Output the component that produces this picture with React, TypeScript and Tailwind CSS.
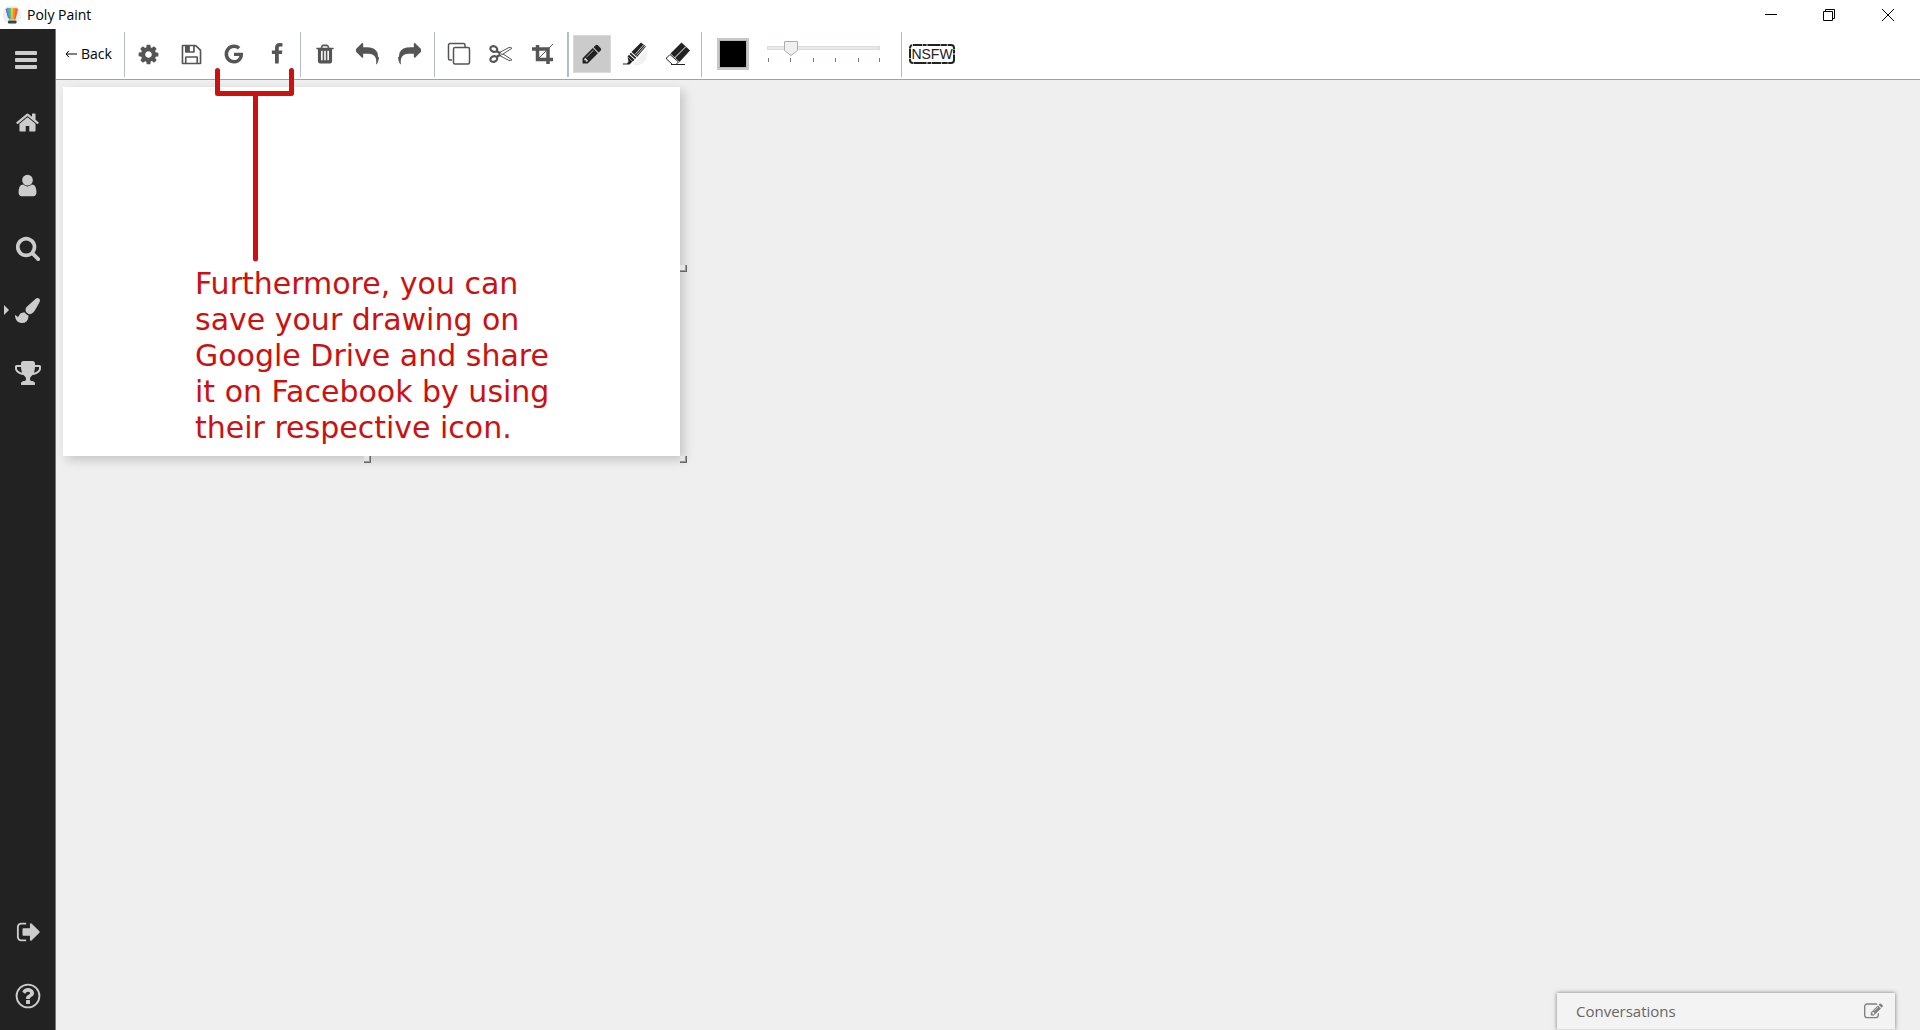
import React, { useState } from "react";

const PATHS = {
  home: "M1472 992v480q0 26-19 45t-45 19h-384v-384h-256v384h-384q-26 0-45-19t-19-45v-480q0-1 .5-3t.5-3l575-474 575 474q1 2 1 6zm223-69l-62 74q-8 9-21 11h-3q-13 0-21-7l-692-577-692 577q-12 8-24 7-13-2-21-11l-62-74q-8-10-7-23.5t11-21.5l719-599q32-26 76-26t76 26l244 204v-195q0-14 9-23t23-9h192q14 0 23 9t9 23v408l219 182q10 8 11 21.5t-7 23.5z",
  user: "M1536 1399q0 109-62.5 187t-150.5 78h-854q-88 0-150.5-78t-62.5-187q0-85 8.5-160.5t31.5-152 58.5-131 94-89 134.5-34.5q131 128 313 128t313-128q76 0 134.5 34.5t94 89 58.5 131 31.5 152 8.5 160.5zm-256-887q0 159-112.5 271.5t-271.5 112.5-271.5-112.5-112.5-271.5 112.5-271.5 271.5-112.5 271.5 112.5 112.5 271.5z",
  search: "M1216 832q0-185-131.5-316.5t-316.5-131.5-316.5 131.5-131.5 316.5 131.5 316.5 316.5 131.5 316.5-131.5 131.5-316.5zm512 832q0 52-38 90t-90 38q-54 0-90-38l-343-342q-179 124-399 124-143 0-273.5-55.5t-225-150-150-225-55.5-273.5 55.5-273.5 150-225 225-150 273.5-55.5 273.5 55.5 225 150 150 225 55.5 273.5q0 220-124 399l343 343q37 37 37 90z",
  brush: "M1615 0q70 0 122.5 46.5t52.5 116.5q0 63-45 151-332 629-465 752-97 91-218 91-126 0-216.5-92.5t-90.5-219.5q0-128 92-212l638-579q59-54 130-54zm-909 1034q39 76 106.5 130t150.5 76l1 71q4 213-129.5 347t-348.5 134q-123 0-218-46.5t-152.5-127.5-86.5-183-29-220q7 5 41 30t62 44.5 59 36.5 46 17q41 0 55-37 25-66 57.5-112.5t69.5-76 88-47.5 103-25.5 125-10.5z",
  trophy: "M522 883q-74-162-74-371h-256v96q0 78 94.5 162t235.5 113zm1078-275v-96h-256q0 209-74 371 141-29 235.5-113t94.5-162zm128-128v128q0 71-41.5 143t-112 130-173 97.5-215.5 44.5q-42 54-95 95-38 34-52.5 72.5t-14.5 89.5q0 54 30.5 91t97.5 37q75 0 133.5 45.5t58.5 114.5v64q0 14-9 23t-23 9h-832q-14 0-23-9t-9-23v-64q0-69 58.5-114.5t133.5-45.5q67 0 97.5-37t30.5-91q0-51-14.5-89.5t-52.5-72.5q-53-41-95-95-113-5-215.5-44.5t-173-97.5-112-130-41.5-143v-128q0-40 28-68t68-28h288v-96q0-66 47-113t113-47h576q66 0 113 47t47 113v96h288q40 0 68 28t28 68z",
  signOut: "M704 1440q0 4 1 20t.5 26.5-3 23.5-10 19.5-20.5 6.5h-320q-119 0-203.5-84.5t-84.5-203.5v-704q0-119 84.5-203.5t203.5-84.5h320q13 0 22.5 9.5t9.5 22.5q0 4 1 20t.5 26.5-3 23.5-10 19.5-20.5 6.5h-320q-66 0-113 47t-47 113v704q0 66 47 113t113 47h312l11.5 1 11.5 3 8 5.5 7 9 2 13.5zm928-544q0 26-19 45l-544 544q-19 19-45 19t-45-19-19-45v-288h-448q-26 0-45-19t-19-45v-384q0-26 19-45t45-19h448v-288q0-26 19-45t45-19 45 19l544 544q19 19 19 45z",
  question: "M1024 1376v-192q0-14-9-23t-23-9h-192q-14 0-23 9t-9 23v192q0 14 9 23t23 9h192q14 0 23-9t9-23zm256-672q0-88-55.5-163t-138.5-116-170-41q-243 0-371 213-15 24 8 42l132 100q7 6 19 6 16 0 25-12 53-68 86-92 34-24 86-24 48 0 85.5 26t37.5 59q0 38-20 61t-68 45q-63 28-115.5 86.5t-52.5 125.5v36q0 14 9 23t23 9h192q14 0 23-9t9-23q0-19 21.5-49.5t54.5-49.5q32-18 49-28.5t46-35 44.5-48 28-60.5 12.5-81z",
  cog: "M1152 896q0-106-75-181t-181-75-181 75-75 181 75 181 181 75 181-75 75-181zm512-109v222q0 12-8 23t-20 13l-185 28q-19 54-39 91 35 50 107 138 10 12 10 25t-9 23q-27 37-99 108t-94 71q-12 0-26-9l-138-108q-44 23-91 38-16 136-29 186-7 28-36 28h-222q-14 0-24.5-8.5t-11.5-21.5l-28-184q-49-16-90-37l-141 107q-10 9-25 9-14 0-25-11-126-114-165-168-7-10-7-23 0-12 8-23 15-21 51-66.5t54-70.5q-27-50-41-99l-183-27q-13-2-21-12.5t-8-23.5v-222q0-12 8-23t19-13l186-28q14-46 39-92-40-57-107-138-10-12-10-24 0-10 9-23 26-36 98.5-107.5t94.5-71.5q13 0 26 10l138 107q44-23 91-38 16-136 29-186 7-28 36-28h222q14 0 24.5 8.5t11.5 21.5l28 184q49 16 90 37l142-107q9-9 24-9 13 0 25 10 129 119 165 170 7 8 7 22 0 12-8 23-15 21-51 66.5t-54 70.5q26 50 41 98l183 28q13 2 21 12.5t8 23.5z",
  save: "M512 1536h768v-384h-768v384zm896 0h128v-896q0-14-10-38.5t-20-34.5l-281-281q-10-10-34-20t-39-10v416q0 40-28 68t-68 28h-576q-40 0-68-28t-28-68v-416h-128v1280h128v-416q0-40 28-68t68-28h832q40 0 68 28t28 68v416zm-384-928v-320q0-13-9.5-22.5t-22.5-9.5h-192q-13 0-22.5 9.5t-9.5 22.5v320q0 13 9.5 22.5t22.5 9.5h192q13 0 22.5-9.5t9.5-22.5zm640 32v928q0 40-28 68t-68 28h-1344q-40 0-68-28t-28-68v-1344q0-40 28-68t68-28h928q40 0 88 20t76 48l280 280q28 28 48 76t20 88z",
  google: "M896 786h725q12 67 12 128 0 217-91 387.5t-259.5 266.5-386.5 96q-157 0-299-60.5t-245-163.5-163.5-245-60.5-299 60.5-299 163.5-245 245-163.5 299-60.5q300 0 515 201l-209 201q-123-119-306-119-129 0-238.5 65t-173.5 176.5-64 243.5 64 243.5 173.5 176.5 238.5 65q87 0 160-24t120-60 82-82 51.5-87 22.5-78h-436v-264z",
  facebook: "M1343 12v264h-157q-86 0-116 36t-30 108v189h293l-39 296h-254v759h-306v-759h-255v-296h255v-218q0-186 104-288.5t277-102.5q147 0 228 12z",
  trash: "M704 1376v-704q0-14-9-23t-23-9h-64q-14 0-23 9t-9 23v704q0 14 9 23t23 9h64q14 0 23-9t9-23zm256 0v-704q0-14-9-23t-23-9h-64q-14 0-23 9t-9 23v704q0 14 9 23t23 9h64q14 0 23-9t9-23zm256 0v-704q0-14-9-23t-23-9h-64q-14 0-23 9t-9 23v704q0 14 9 23t23 9h64q14 0 23-9t9-23zm-544-992h448l-48-117q-7-9-17-11h-317q-10 2-17 11zm928 32v64q0 14-9 23t-23 9h-96v948q0 83-47 143.5t-113 60.5h-832q-66 0-113-58.5t-47-141.5v-952h-96q-14 0-23-9t-9-23v-64q0-14 9-23t23-9h309l70-167q15-37 54-63t79-26h320q40 0 79 26t54 63l70 167h309q14 0 23 9t9 23z",
  reply: "M1792 1120q0 166-127 451-3 7-10.5 24t-13.5 30-13 22q-12 17-28 17-15 0-23.5-10t-8.5-25q0-9 2.5-26.5t2.5-23.5q5-68 5-123 0-112-19.5-200.5t-54-153.5-89-112-117.5-78.5-148-48-171-23-196-6.5h-224v256q0 26-19 45t-45 19-45-19l-512-512q-19-19-19-45t19-45l512-512q19-19 45-19t45 19 19 45v256h224q713 0 875 403 53 134 53 333z",
  pencil: "M491 1536l91-91-235-235-91 91v107h128v128h107zm523-928q0-22-22-22-10 0-17 7l-542 542q-7 7-7 17 0 22 22 22 10 0 17-7l542-542q7-7 7-17zm-54-192l416 416-832 832h-416v-416zm683 96q0 53-37 90l-166 166-416-416 166-165q36-38 90-38 53 0 91 38l235 234q37 39 37 91z",
  edit: "M888 1184l116-116-152-152-116 116v56h96v96h56zm440-720q-16-16-33 1l-350 350q-17 17-1 33t33-1l350-350q17-17 1-33zm80 594v190q0 119-84.5 203.5t-203.5 84.5h-832q-119 0-203.5-84.5t-84.5-203.5v-832q0-119 84.5-203.5t203.5-84.5h832q63 0 117 25 15 7 18 23 3 17-9 29l-49 49q-14 14-32 8-23-6-45-6h-832q-66 0-113 47t-47 113v832q0 66 47 113t113 47h832q66 0 113-47t47-113v-126q0-13 9-22l64-64q15-15 35-7t20 29zm-96-738l288 288-672 672h-288v-288zm444 132l-92 92-288-288 92-92q28-28 68-28t68 28l152 152q28 28 28 68t-28 68z",
};

function Icon({ name, className }: { name: keyof typeof PATHS; className: string }) {
  return (
    <svg viewBox="0 0 1792 1792" className={className} fill="currentColor" aria-hidden="true">
      <path d={PATHS[name]} />
    </svg>
  );
}

function LogoIcon() {
  return (
    <svg viewBox="0 0 20 20" className="size-5" aria-hidden="true">
      <circle cx="10" cy="10" r="9.500" fill="#eeeeee" />
      <path d="M4 4q1.500-2 3.500-.5L9 14.500H7z" fill="#3fa0e8" />
      <path d="M6.500 3.500q1.500-1.500 3 0l.5 11H8.500z" fill="#5cc45a" />
      <path d="M9 3.500q1-1.500 2.500 0l-.5 11H9.500z" fill="#f6c92c" />
      <path d="M11 3.500q1.500-1.500 3 0l-1.500 11h-2z" fill="#f78b28" />
      <path d="M13.500 3.500q2-1 2.500 1l-2.500 10H12z" fill="#f0642c" />
      <path d="M4 4l2.500 9" stroke="#7a5ad0" strokeWidth="1" />
      <rect x="6" y="15.500" width="8.500" height="3" rx="1" fill="#3c4444" />
    </svg>
  );
}

function CopyIcon() {
  return (
    <svg viewBox="0 0 24 24" className="size-6" fill="none" stroke="currentColor" strokeWidth="1.500" aria-hidden="true">
      <path d="M5 18H3a1.500 1.500 0 0 1-1.500-1.500V3A1.500 1.500 0 0 1 3 1.500h13.500A1.500 1.500 0 0 1 18 3v2" />
      <rect x="6.500" y="5.500" width="16" height="16.500" rx="1.500" />
    </svg>
  );
}

function ScissorsIcon() {
  return (
    <svg viewBox="0 0 24 20" className="h-5 w-6" fill="none" stroke="currentColor" aria-hidden="true">
      <ellipse cx="4.800" cy="5" rx="3.500" ry="2.700" strokeWidth="2.200" transform="rotate(25 4.800 5)" />
      <ellipse cx="4.800" cy="15" rx="3.500" ry="2.700" strokeWidth="2.200" transform="rotate(-25 4.800 15)" />
      <path d="M7.500 7l4 2.500M7.500 13l4-2.500" strokeWidth="2.500" />
      <path d="M10.500 8.500l9.500-5q1.500-.5 3 .7L12.500 11M10.500 11.500l9.500 5q1.500.5 3-.7L14 10" strokeWidth="1" />
      <circle cx="12.500" cy="10" r=".6" fill="currentColor" stroke="none" />
    </svg>
  );
}

function CropIcon() {
  return (
    <svg viewBox="0 0 22 22" className="size-[22px]" fill="none" stroke="currentColor" aria-hidden="true">
      <path d="M5.500 2v14.500H21M0 6h16v15" strokeWidth="3.500" />
      <path d="M6 16L21 1" strokeWidth="1" />
    </svg>
  );
}

function HighlighterIcon() {
  return (
    <svg viewBox="0 0 24 24" className="size-6" aria-hidden="true">
      <path d="M14 23.500q9.500-2 10-10V7L10 22z" fill="#f1f1f1" />
      <path d="M18 .5l5 4L14 15 8.500 10z" fill="#222222" />
      <path d="M20.500 3L12 12.500M22 4l-8.500 9.500" stroke="#ffffff" strokeWidth=".8" />
      <path d="M7.800 10.800l5.500 5-1.200 1.200-5.500-5zM6 12.700l5.500 5-1.500 1.800L4.500 14.500z" fill="#222222" />
      <path d="M4.500 15l5 4.500L6.500 22.500H0v-1h4l1.500-2z" fill="#222222" />
    </svg>
  );
}

function EraserIcon() {
  return (
    <svg viewBox="0 0 26 24" className="h-6 w-[26px]" aria-hidden="true">
      <path d="M16.500 .5l8.500 8-10.500 11.500-9-8.500z" fill="#222222" />
      <path d="M21 4.500L9.500 16" stroke="#ffffff" strokeWidth="1" />
      <path d="M5 12.500l8.500 7.500-2.500 2.500H7.500L1.500 17v-1z" fill="#ffffff" stroke="#222222" strokeWidth="1" />
      <path d="M6 22.500h14" stroke="#222222" strokeWidth="1" />
    </svg>
  );
}

function ToolGroup({ className, children }: { className: string; children: React.ReactNode }) {
  return <div className={`flex h-[45px] shrink-0 items-center border-[#b5bcc6] ${className}`}>{children}</div>;
}

function Tool({ label, active, children }: { label: string; active?: boolean; children: React.ReactNode }) {
  return (
    <div className="flex flex-1 justify-center">
      <button
        type="button"
        aria-label={label}
        title={label}
        className={`flex size-[38px] items-center justify-center ${active ? "border border-[#dadada] bg-[#cbcbcb] text-[#222222]" : "text-[#555555]"}`}
      >
        {children}
      </button>
    </div>
  );
}

function SizeSlider() {
  const [size, setSize] = useState(20);
  const x = 8 + size * 0.8;
  return (
    <div className="relative h-[26px] w-[114px]">
      <svg viewBox="0 0 114 26" className="h-[26px] w-[114px]" aria-hidden="true">
        <rect x=".5" y="5.500" width="112" height="3" fill="#e7eaea" stroke="#d9dcdc" />
        {[1, 23, 46, 68, 91, 112].map((t) => (
          <rect key={t} x={t} y="17" width="1" height="4" fill="#777777" />
        ))}
        <path d={`M${x - 6.5} .5h13v9l-6.500 5-6.500-5z`} fill="#f0f0f0" stroke="#acacac" />
      </svg>
      <input
        type="range"
        aria-label="Brush size"
        min={0}
        max={100}
        value={size}
        onChange={(e) => setSize(Number(e.target.value))}
        className="absolute inset-0 w-full cursor-pointer opacity-0"
      />
    </div>
  );
}

function NavButton({ label, className, children }: { label: string; className: string; children: React.ReactNode }) {
  return (
    <button type="button" aria-label={label} title={label} className={`relative flex w-full shrink-0 items-center justify-center text-[#cccccc] ${className}`}>
      {children}
    </button>
  );
}

function Grip({ className }: { className: string }) {
  return <span className={`absolute size-[7px] border-r border-b border-[#666666] bg-[#e4e4e4] shadow-[inset_-1px_-1px_0_#999999] ${className}`} />;
}

export default function App() {
  return (
    <div className="flex h-screen flex-col bg-white font-['Open_Sans',sans-serif] text-black">
      <header className="flex h-[29px] shrink-0 items-center pl-0.5">
        <LogoIcon />
        <h1 className="ml-[5px] flex-1 text-[14px]">Poly Paint</h1>
        <button type="button" aria-label="Minimize" className="flex h-full w-[58px] items-center justify-center">
          <svg viewBox="0 0 12 12" className="size-3" aria-hidden="true"><path d="M0 5.500h12" stroke="#000000" /></svg>
        </button>
        <button type="button" aria-label="Restore" className="flex h-full w-[58px] items-center justify-center">
          <svg viewBox="0 0 12 12" className="size-3" fill="none" stroke="#000000" aria-hidden="true"><path d="M.5 2.500h9v9h-9zM2.500 2.500v-2h9v9h-2" /></svg>
        </button>
        <button type="button" aria-label="Close" className="mr-0.5 flex h-full w-[60px] items-center justify-center">
          <svg viewBox="0 0 12 12" className="size-3" stroke="#000000" aria-hidden="true"><path d="M0 0l12 12M12 0L0 12" /></svg>
        </button>
      </header>

      <div className="flex min-h-0 flex-1">
        <nav aria-label="Main" className="flex w-14 shrink-0 flex-col border-r border-[#777777] bg-[#222222] pb-0.5">
          <NavButton label="Menu" className="h-[62px] pr-1">
            <svg viewBox="0 0 22 18" className="h-[18px] w-[22px]" fill="currentColor" aria-hidden="true">
              <rect width="22" height="4" rx="1" /><rect y="7" width="22" height="4" rx="1" /><rect y="14" width="22" height="4" rx="1" />
            </svg>
          </NavButton>
          <NavButton label="Home" className="h-[63px]"><Icon name="home" className="size-[25px]" /></NavButton>
          <NavButton label="Profile" className="h-[63px]"><Icon name="user" className="size-[25px]" /></NavButton>
          <NavButton label="Search" className="h-[62px]"><Icon name="search" className="size-[26px]" /></NavButton>
          <NavButton label="Draw" className="h-[62px]">
            <svg viewBox="0 0 5 10" className="absolute left-1 h-2.5 w-[5px]" fill="currentColor" aria-hidden="true"><path d="M0 0l5 5-5 5z" /></svg>
            <Icon name="brush" className="size-[25px]" />
          </NavButton>
          <NavButton label="Achievements" className="h-16"><Icon name="trophy" className="size-7" /></NavButton>
          <div className="flex-1" />
          <NavButton label="Sign out" className="h-16"><Icon name="signOut" className="ml-0.5 size-[26px]" /></NavButton>
          <NavButton label="Help" className="h-16">
            <svg viewBox="0 0 1792 1792" className="size-7" fill="currentColor" aria-hidden="true">
              <circle cx="896" cy="896" r="730" fill="none" stroke="currentColor" strokeWidth="120" />
              <path d={PATHS.question} />
            </svg>
          </NavButton>
        </nav>

        <div className="flex min-w-0 flex-1 flex-col">
          <div role="toolbar" aria-label="Drawing tools" className="flex h-[51px] shrink-0 items-center border-b border-[#a0a0a0]">
            <div className="flex h-[45px] w-[69px] shrink-0 items-center border-r border-[#b5bcc6] pl-[9px]">
              <button type="button" className="flex items-center gap-1 pb-px text-[14px]">
                <svg viewBox="0 0 12 8" className="h-2 w-3" fill="none" stroke="#000000" aria-hidden="true"><path d="M12 4H1M4 .8L1 4l3 3.200" /></svg>
                Back
              </button>
            </div>
            <ToolGroup className="w-[176px] border-r px-0.5">
              <Tool label="Settings"><Icon name="cog" className="size-[23px]" /></Tool>
              <Tool label="Save"><Icon name="save" className="size-[23px]" /></Tool>
              <Tool label="Save to Google Drive"><Icon name="google" className="size-[22px]" /></Tool>
              <Tool label="Share on Facebook"><Icon name="facebook" className="size-[22px]" /></Tool>
            </ToolGroup>
            <ToolGroup className="w-[134px] border-r px-[3px]">
              <Tool label="Clear"><Icon name="trash" className="size-[22px]" /></Tool>
              <Tool label="Undo"><Icon name="reply" className="size-[23px]" /></Tool>
              <Tool label="Redo"><Icon name="reply" className="size-[23px] -scale-x-100" /></Tool>
            </ToolGroup>
            <ToolGroup className="w-[134px] border-r-2 px-[3px]">
              <Tool label="Duplicate"><CopyIcon /></Tool>
              <Tool label="Cut"><ScissorsIcon /></Tool>
              <Tool label="Crop"><CropIcon /></Tool>
            </ToolGroup>
            <ToolGroup className="w-[133px] border-r px-0.5">
              <Tool label="Pencil" active><Icon name="pencil" className="size-[22px]" /></Tool>
              <Tool label="Eraser by stroke"><HighlighterIcon /></Tool>
              <Tool label="Eraser"><EraserIcon /></Tool>
            </ToolGroup>
            <div className="flex h-[45px] w-[200px] shrink-0 items-center justify-between border-r border-[#b5bcc6] pr-5 pl-[15px]">
              <input
                type="color"
                aria-label="Brush color"
                defaultValue="#000000"
                className="block size-8 appearance-none border-2 border-[#c8c8c8] bg-[#b5b5b5] p-px [&::-webkit-color-swatch]:border-0 [&::-webkit-color-swatch-wrapper]:p-0"
              />
              <SizeSlider />
            </div>
            <button type="button" className="relative ml-[7px] flex h-5 w-[46px] items-center justify-center font-['Liberation_Sans',sans-serif] text-[14px] leading-5 text-[#222222]">
              <svg viewBox="0 0 46 20" className="absolute inset-0 size-full" fill="none" stroke="#222222" strokeWidth="2" aria-hidden="true">
                <rect x="1" y="1" width="44" height="18" rx="3" strokeDasharray="9 .6 4 .8 13 .5 6 .7" />
              </svg>
              NSFW
            </button>
          </div>

          <main className="flex min-h-0 flex-1 flex-col bg-[#efefef]">
            <div className="min-h-0 flex-1 px-[7px] pt-[7px]">
              <div className="relative h-[369px] w-[617px] bg-white shadow-[4px_4px_10px_rgba(0,0,0,0.18)]">
                <svg viewBox="0 0 80 196" className="absolute -top-[19px] left-[152px] h-[196px] w-20" fill="none" stroke="#cc1111" strokeWidth="5" strokeLinecap="round" strokeLinejoin="round" aria-hidden="true">
                  <path d="M2.500 2.500v23h74v-23M40.500 26v165" />
                </svg>
                <p className="absolute top-[179px] left-[132px] font-['DejaVu_Sans',sans-serif] text-[30px] leading-9 whitespace-pre text-[#cc1111]">
                  {"Furthermore, you can\nsave your drawing on\nGoogle Drive and share\nit on Facebook by using\ntheir respective icon."}
                </p>
                <Grip className="top-[178px] left-full" />
                <Grip className="top-full left-[301px]" />
                <Grip className="top-full left-full" />
              </div>
            </div>
            <section className="mr-[25px] flex h-[37px] w-[338px] shrink-0 items-center justify-between self-end border-b border-[#dddddd] bg-[#f3f3f3] pr-3 pl-[19px] shadow-[0_0_4px_rgba(0,0,0,0.5)]">
              <h2 className="text-[15px] text-[#666666]">Conversations</h2>
              <button type="button" aria-label="New conversation" className="text-[#808080]"><Icon name="edit" className="size-[19px]" /></button>
            </section>
          </main>
        </div>
      </div>
    </div>
  );
}
